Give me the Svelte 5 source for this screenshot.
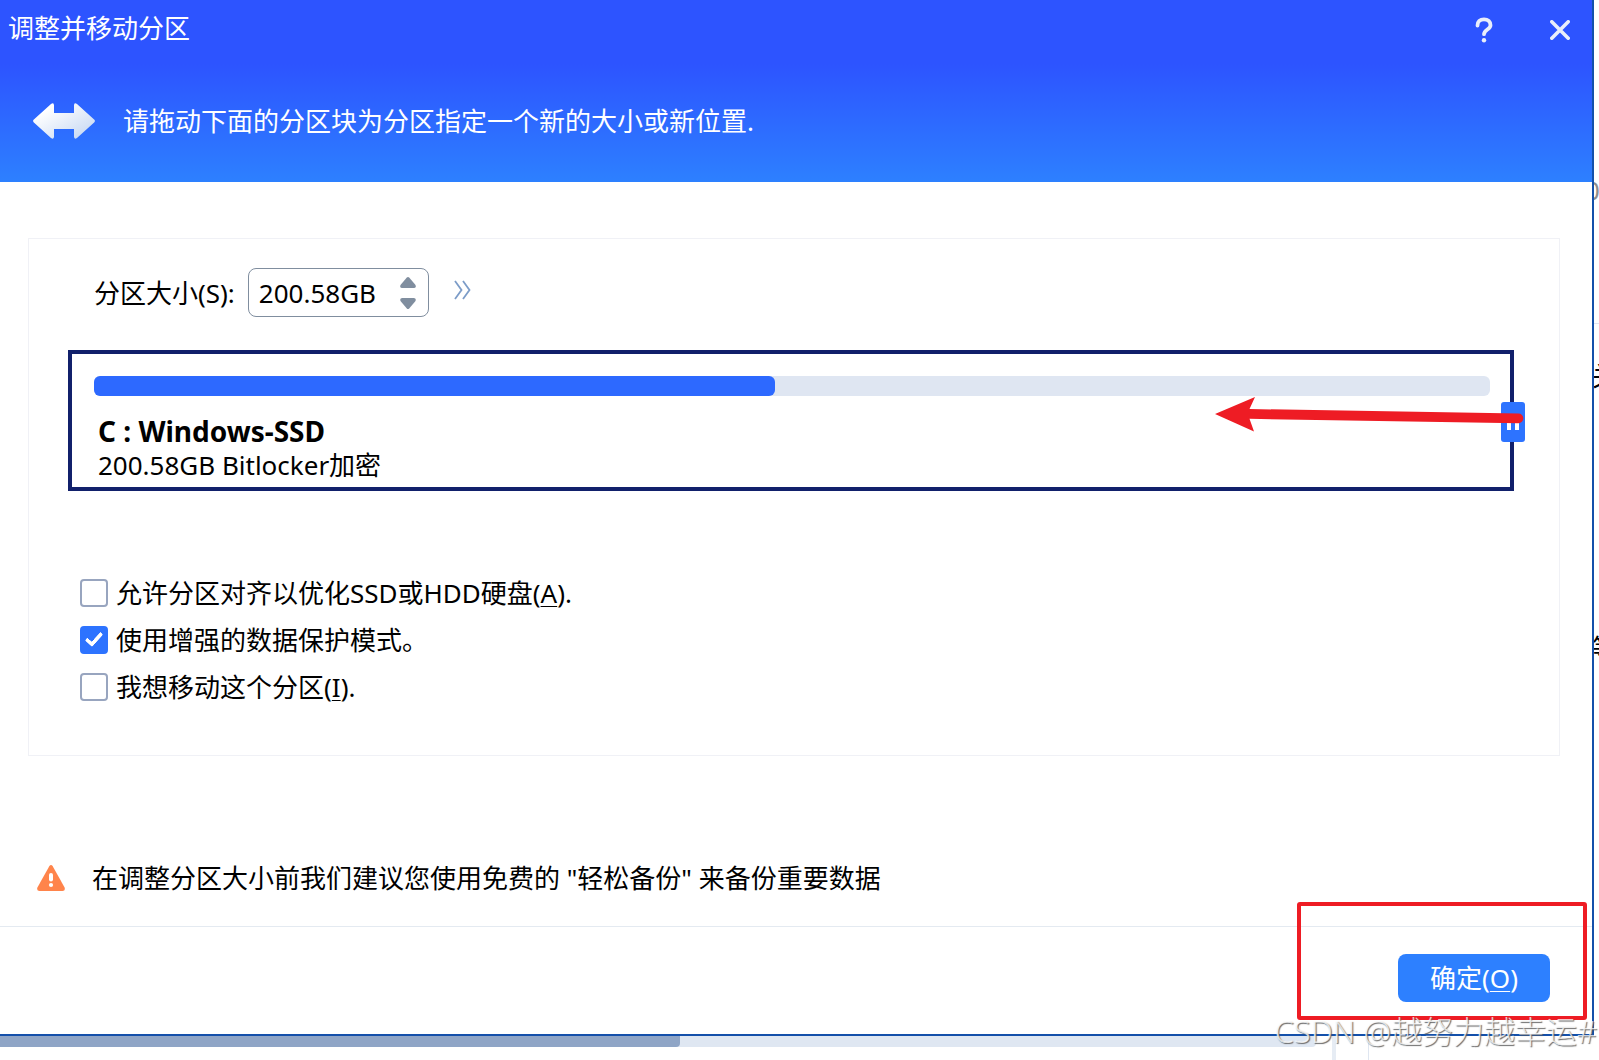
<script>
	let partition = {
		name: 'C : Windows-SSD',
		size: '200.58GB',
		note: 'Bitlocker加密',
		used: 48.8
	};

	let size = partition.size;

	let options = [
		{ id: 'align', text: '允许分区对齐以优化SSD或HDD硬盘', key: 'A', end: '.', checked: false },
		{ id: 'protect', text: '使用增强的数据保护模式。', key: '', end: '', checked: true },
		{ id: 'move', text: '我想移动这个分区', key: 'I', end: '.', checked: false }
	];

	function step(amount) {
		size = (parseFloat(size) + amount).toFixed(2) + 'GB';
	}
</script>

<div class="screen">
	<div class="dialog">
		<header>
			<div class="titlebar">
				<h1>调整并移动分区</h1>
				<button class="icon-button" aria-label="帮助">
					<svg width="20" height="26" viewBox="0 0 20 26" fill="none">
						<path
							d="M3.500 8.500C3.500 4.500 6 2.400 10 2.400S16.500 4.800 16.500 8.200c0 4.200-6.500 4.400-6.500 9"
							stroke="#e9eefa"
							stroke-width="3.800"
							stroke-linecap="round"
						/>
						<circle cx="10" cy="23.200" r="2.200" fill="#e9eefa" />
					</svg>
				</button>
				<button class="icon-button" aria-label="关闭">
					<svg width="20" height="20" viewBox="0 0 20 20" fill="none">
						<path
							d="M1.8 1.8 18.2 18.2M18.2 1.8 1.8 18.2"
							stroke="#e9eefa"
							stroke-width="3.6"
							stroke-linecap="round"
						/>
					</svg>
				</button>
			</div>
			<div class="hint">
				<svg width="62" height="36" viewBox="0 0 62 36">
					<defs>
						<linearGradient id="arrow-fill" x1="0" y1="0" x2="1" y2="1">
							<stop offset="0.2" stop-color="#ffffff" />
							<stop offset="0.9" stop-color="#c8d9f3" />
						</linearGradient>
					</defs>
					<path
						d="M.6 16.8 18 1Q21 -.8 21 2.5V10H41V2.5Q41-.8 44 1L61.4 16.8Q62.400 18 61.4 19.200L44 35Q41 36.800 41 33.500V26H21V33.500Q21 36.800 18 35L.6 19.200Q-.4 18 .6 16.8Z"
						fill="url(#arrow-fill)"
					/>
				</svg>
				<p>请拖动下面的分区块为分区指定一个新的大小或新位置.</p>
			</div>
		</header>

		<main>
			<section class="group">
				<div class="size-row">
					<label for="size">分区大小(S):</label>
					<div class="spinbox">
						<input id="size" type="text" bind:value={size} />
						<div class="spin-buttons">
							<button aria-label="增加" on:click={() => step(1)}>
								<svg width="16" height="11" viewBox="0 0 16 11">
									<path d="M6.800.6Q8-.4 9.200.6L15.500 8Q16.500 11 13.800 11H2.200Q-.5 11 .5 8Z" fill="#808e9f" />
								</svg>
							</button>
							<button aria-label="减少" on:click={() => step(-1)}>
								<svg width="16" height="11" viewBox="0 0 16 11">
									<path d="M6.800 10.400Q8 11.400 9.200 10.400L15.500 3Q16.500 0 13.800 0H2.200Q-.5 0 .5 3Z" fill="#808e9f" />
								</svg>
							</button>
						</div>
					</div>
					<button class="more" aria-label="更多">
						<svg width="17" height="20" viewBox="0 0 17 20" fill="none">
							<path d="M1 1 7.500 10 1 19M9 1 15.500 10 9 19" stroke="#7c9cc8" stroke-width="1.8" />
						</svg>
					</button>
				</div>

				<div class="partition">
					<div class="bar">
						<div class="used" style="width: {partition.used}%"></div>
					</div>
					<p class="name">{partition.name}</p>
					<p>{partition.size} {partition.note}</p>
					<button class="handle" aria-label="拖动调整大小"><i></i><i></i></button>
					<svg class="drag-arrow" width="309" height="36" viewBox="0 0 309 36">
						<path d="M0 17 40 0 34.500 12 303.500 16.500A4.800 4.800 0 0 1 303.500 26.200L34.500 21.800 39 34.500Z" fill="#ee1c24" />
					</svg>
				</div>

				<div class="options">
					{#each options as option}
						<div class="option">
							<input id={option.id} type="checkbox" bind:checked={option.checked} />
							<label for={option.id}>
								{option.text}{#if option.key}(<u>{option.key}</u>){/if}{option.end}
							</label>
						</div>
					{/each}
				</div>
			</section>

			<div class="warning">
				<svg width="28" height="26" viewBox="0 0 28 26">
					<path d="M12.400 1Q14-1 15.600 1L27.600 22.500Q28.600 26 25.500 26H2.500Q-.6 26 .4 22.500Z" fill="#ff844b" />
					<rect x="12" y="8" width="4" height="8.500" rx="2" fill="#fff" />
					<circle cx="14" cy="20" r="2.100" fill="#fff" />
				</svg>
				<p>在调整分区大小前我们建议您使用免费的 "轻松备份" 来备份重要数据</p>
			</div>
		</main>

		<footer>
			<button class="ok">确定(<u>O</u>)</button>
			<div class="marker"></div>
		</footer>
	</div>

	<!-- edges of the main window that show from behind the dialog -->
	<div class="behind-right">
		<span class="number">0</span>
		<hr />
		<span class="first">关</span>
		<span>等</span>
	</div>
	<div class="behind-bottom">
		<div class="scroll"><div class="thumb"></div></div>
		<div class="splitter"></div>
	</div>

	<div class="watermark">CSDN @越努力越幸运#</div>
</div>

<style>
	:global(body) {
		margin: 0;
		background: #fff;
	}

	.screen {
		position: relative;
		display: grid;
		grid-template-columns: 1fr 5px;
		grid-template-rows: 1fr 24px;
		min-height: 100vh;
		overflow: hidden;
		font-family: 'Noto Sans', 'Noto Sans CJK SC', sans-serif;
		font-size: 26px;
		line-height: 34px;
		color: #000;
	}

	h1,
	p {
		margin: 0;
		font-size: 26px;
		font-weight: 400;
	}

	button {
		display: flex;
		align-items: center;
		justify-content: center;
		padding: 0;
		border: 0;
		background: none;
		font: inherit;
		cursor: pointer;
	}

	svg {
		display: block;
		flex: none;
	}

	u {
		text-decoration-thickness: 1px;
		text-underline-offset: 3px;
	}

	.dialog {
		display: flex;
		flex-direction: column;
		border-right: 2px solid #1450aa;
		border-bottom: 2px solid #1450aa;
		background: #fff;
	}

	header {
		height: 182px;
		background: linear-gradient(#2d54ff 0, #2d54ff 64px, #2d80ff 182px);
		color: #fff;
	}

	.titlebar {
		display: flex;
		align-items: center;
		height: 60px;
		padding: 0 14px 0 8px;
		gap: 40px;
	}

	h1 {
		flex: 1;
		padding-bottom: 4px;
	}

	.icon-button {
		width: 36px;
		height: 36px;
	}

	.hint {
		display: flex;
		align-items: center;
		gap: 28px;
		height: 122px;
		padding-left: 33px;
	}

	main {
		flex: 1;
		display: flex;
		flex-direction: column;
		padding: 56px 32px 0 28px;
	}

	.group {
		padding: 29px 45px 45px 39px;
		border: 1px solid #f0f1f6;
	}

	.size-row {
		display: flex;
		align-items: center;
		padding-left: 26px;
	}

	.spinbox {
		display: flex;
		box-sizing: border-box;
		width: 181px;
		height: 49px;
		margin: 0 25px 0 13px;
		padding: 0 12px 0 10px;
		border: 1px solid #808e9f;
		border-radius: 8px;
	}

	.spinbox input {
		flex: 1;
		min-width: 0;
		padding: 0;
		border: 0;
		outline: 0;
		background: none;
		font: inherit;
		color: inherit;
	}

	.spin-buttons {
		display: flex;
		flex-direction: column;
		justify-content: center;
		gap: 10px;
	}

	.more {
		padding-bottom: 6px;
	}

	.partition {
		position: relative;
		margin-top: 33px;
		padding: 22px 20px 5px 22px;
		border: 4px solid #11206b;
	}

	.bar {
		height: 20px;
		margin-bottom: 18px;
		border-radius: 6px;
		background: #dfe6f2;
	}

	.used {
		height: 100%;
		border-radius: 6px;
		background: #2d69ff;
	}

	.partition p {
		padding-left: 4px;
	}

	.partition .name {
		font-size: 28px;
		font-weight: 700;
	}

	.handle {
		position: absolute;
		top: 48px;
		right: -15px;
		gap: 4px;
		width: 24px;
		height: 40px;
		border-radius: 3px;
		background: #2d73ff;
	}

	.handle i {
		width: 4px;
		height: 16px;
		background: #fff;
	}

	.drag-arrow {
		position: absolute;
		top: 43px;
		right: -14px;
		pointer-events: none;
	}

	.options {
		margin-top: 78px;
		padding-left: 12px;
	}

	.option {
		display: flex;
		align-items: center;
		gap: 8px;
		height: 47px;
	}

	.option input {
		appearance: none;
		display: grid;
		place-items: center;
		width: 28px;
		height: 28px;
		margin: 0;
		border: 2px solid #98a5bf;
		border-radius: 4px;
		background: #fff;
	}

	.option input:checked {
		border-color: #2d73ff;
		background: #2d73ff;
	}

	.option input:checked::before {
		content: '';
		width: 6px;
		height: 13px;
		margin-bottom: 4px;
		border: solid #fff;
		border-width: 0 4px 4px 0;
		border-radius: 2px;
		transform: rotate(42deg);
	}

	.warning {
		display: flex;
		align-items: center;
		gap: 27px;
		padding: 105px 0 30px 9px;
	}

	footer {
		position: relative;
		display: flex;
		justify-content: flex-end;
		padding: 27px 42px 32px;
		border-top: 1px solid #e4eaf1;
	}

	.ok {
		width: 152px;
		height: 48px;
		border-radius: 8px;
		background: #2d80ff;
		color: #fff;
	}

	.marker {
		position: absolute;
		top: -25px;
		right: 5px;
		box-sizing: border-box;
		width: 290px;
		height: 118px;
		border: 4px solid #ee1c24;
		border-radius: 3px;
		pointer-events: none;
	}

	.behind-right {
		display: flex;
		flex-direction: column;
		overflow: hidden;
	}

	.behind-right span {
		margin-left: -2px;
	}

	.behind-right .number {
		margin: 173px 0 0 -9px;
		color: #8d8d8d;
	}

	hr {
		width: 100%;
		margin: 116px 0 35px;
		border: 0;
		border-top: 1px solid #e1e5f2;
	}

	.behind-right .first {
		margin-bottom: 238px;
	}

	.behind-bottom {
		grid-column: 1 / -1;
		display: flex;
		align-items: flex-start;
	}

	.scroll {
		width: 1316px;
		height: 11px;
		border-radius: 0 0 4px 0;
		background: #dfe7f2;
	}

	.thumb {
		width: 680px;
		height: 100%;
		border-radius: 0 0 4px 0;
		background: #8fa5c6;
	}

	.splitter {
		width: 32px;
		height: 24px;
		margin-left: 16px;
		border-left: 4px solid #e6ecf4;
		border-right: 1px solid #dfe6f0;
	}

	.watermark {
		position: absolute;
		right: 2px;
		bottom: 12px;
		font-size: 31px;
		font-weight: 300;
		white-space: nowrap;
		color: rgba(255, 255, 255, 0.75);
		text-shadow: 1px 1px 1px rgba(90, 90, 90, 0.9);
		pointer-events: none;
	}
</style>
